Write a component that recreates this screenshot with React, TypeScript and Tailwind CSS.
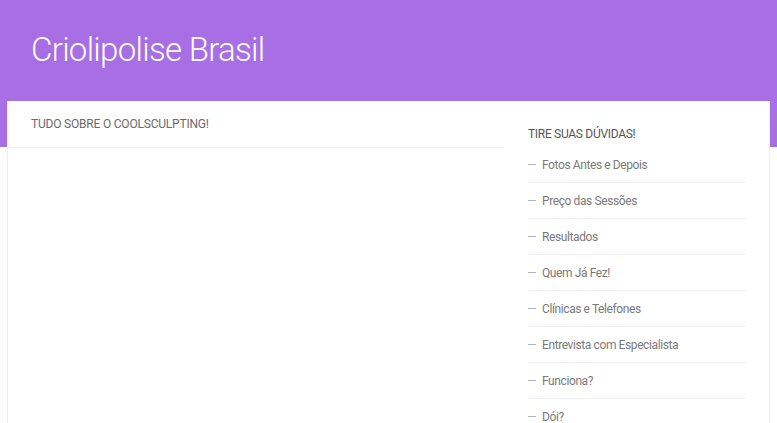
import React from "react";

const items = [
  "Fotos Antes e Depois",
  "Preço das Sessões",
  "Resultados",
  "Quem Já Fez!",
  "Clínicas e Telefones",
  "Entrevista com Especialista",
  "Funciona?",
  "Dói?",
];

export default function App() {
  return (
    <div className="min-h-[423px] bg-white" style={{ fontFamily: "Roboto, 'Noto Sans', sans-serif" }}>
      <header className="h-[147px] bg-[#a86ee3]">
        <h1 className="pl-[31px] pt-[28px] text-[33px] leading-[44px] font-light tracking-[-0.7px] text-white">
          Criolipolise Brasil
        </h1>
      </header>
      <div className="mx-[7px] -mt-[46px] flex border-x border-[#eeeeee] bg-white">
        <main className="w-[496px]">
          <div className="h-[47px] border-b border-[#eeeeee] pl-[23px] pt-[15px]">
            <h2 className="text-[12px] leading-[16px] uppercase text-[#6b6b6b] tracking-[-0.2px]">
              Tudo sobre o Coolsculpting!
            </h2>
          </div>
        </main>
        <aside className="ml-[24px] w-[218px] pt-[25px]">
          <h3 className="text-[12px] leading-[16px] uppercase text-[#555555] tracking-[-0.3px]">
            Tire suas dúvidas!
          </h3>
          <ul className="mt-[5px]">
            {items.map((t) => (
              <li
                key={t}
                className="flex h-[36px] items-center border-b border-[#eeeeee] text-[12px] text-[#7a7a7a] tracking-[-0.4px]"
              >
                <span className="mr-[6px] inline-block h-px w-[8px] bg-[#b5b5b5]" />
                {t}
              </li>
            ))}
          </ul>
        </aside>
      </div>
    </div>
  );
}
